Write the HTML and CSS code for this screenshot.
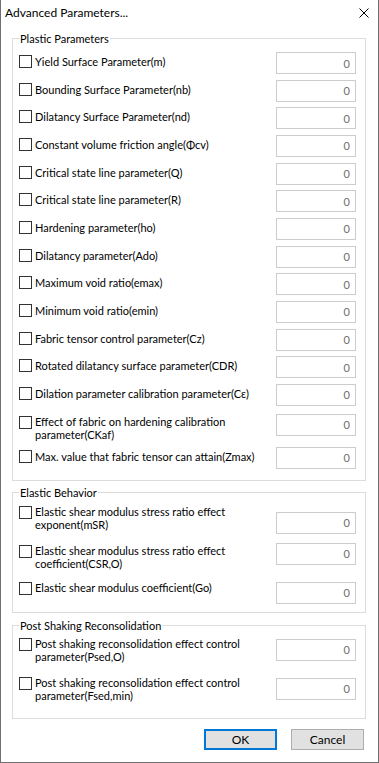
FILE: index.html
```html
<!DOCTYPE html>
<html lang="en">
<head>
    <meta charset="UTF-8">
    <meta name="viewport" content="width=device-width, initial-scale=1.0">
    <title>Advanced Parameters...</title>
    <link rel="stylesheet" href="styles.css">
</head>
<body>

    <div class="dialog">
        <div class="titlebar">
            <span class="title">Advanced Parameters...</span>
            <button type="button" class="close" aria-label="Close">
                <svg width="10" height="10" viewBox="0 0 10 10">
                    <path d="M0.5 0.5 L9.5 9.5 M9.5 0.5 L0.5 9.5" stroke="#000" stroke-width="1" fill="none"/>
                </svg>
            </button>
        </div>

        <form class="content" id="advancedForm">
            <fieldset class="group plastic">
                <legend>Plastic Parameters</legend>
                <div class="row"><input type="checkbox" class="check" id="p1"><label for="p1">Yield Surface Parameter(m)</label><input type="text" class="value" value="0" disabled></div>
                <div class="row"><input type="checkbox" class="check" id="p2"><label for="p2">Bounding Surface Parameter(nb)</label><input type="text" class="value" value="0" disabled></div>
                <div class="row"><input type="checkbox" class="check" id="p3"><label for="p3">Dilatancy Surface Parameter(nd)</label><input type="text" class="value" value="0" disabled></div>
                <div class="row"><input type="checkbox" class="check" id="p4"><label for="p4">Constant volume friction angle(Φcv)</label><input type="text" class="value" value="0" disabled></div>
                <div class="row"><input type="checkbox" class="check" id="p5"><label for="p5">Critical state line parameter(Q)</label><input type="text" class="value" value="0" disabled></div>
                <div class="row"><input type="checkbox" class="check" id="p6"><label for="p6">Critical state line parameter(R)</label><input type="text" class="value" value="0" disabled></div>
                <div class="row"><input type="checkbox" class="check" id="p7"><label for="p7">Hardening parameter(ho)</label><input type="text" class="value" value="0" disabled></div>
                <div class="row"><input type="checkbox" class="check" id="p8"><label for="p8">Dilatancy parameter(Ado)</label><input type="text" class="value" value="0" disabled></div>
                <div class="row"><input type="checkbox" class="check" id="p9"><label for="p9">Maximum void ratio(emax)</label><input type="text" class="value" value="0" disabled></div>
                <div class="row"><input type="checkbox" class="check" id="p10"><label for="p10">Minimum void ratio(emin)</label><input type="text" class="value" value="0" disabled></div>
                <div class="row"><input type="checkbox" class="check" id="p11"><label for="p11">Fabric tensor control parameter(Cz)</label><input type="text" class="value" value="0" disabled></div>
                <div class="row"><input type="checkbox" class="check" id="p12"><label for="p12">Rotated dilatancy surface parameter(CDR)</label><input type="text" class="value" value="0" disabled></div>
                <div class="row"><input type="checkbox" class="check" id="p13"><label for="p13">Dilation parameter calibration parameter(Cε)</label><input type="text" class="value" value="0" disabled></div>
                <div class="row wrap extra"><input type="checkbox" class="check" id="p14"><label for="p14">Effect of fabric on hardening calibration<br>parameter(CKaf)</label><input type="text" class="value" value="0" disabled></div>
                <div class="row"><input type="checkbox" class="check" id="p15"><label for="p15">Max. value that fabric tensor can attain(Zmax)</label><input type="text" class="value" value="0" disabled></div>
            </fieldset>

            <fieldset class="group elastic">
                <legend>Elastic Behavior</legend>
                <div class="row wrap drop"><input type="checkbox" class="check" id="e1"><label for="e1">Elastic shear modulus stress ratio effect<br>exponent(mSR)</label><input type="text" class="value" value="0" disabled></div>
                <div class="row wrap"><input type="checkbox" class="check" id="e2"><label for="e2">Elastic shear modulus stress ratio effect<br>coefficient(CSR,O)</label><input type="text" class="value" value="0" disabled></div>
                <div class="row top"><input type="checkbox" class="check" id="e3"><label for="e3">Elastic shear modulus coefficient(Go)</label><input type="text" class="value" value="0" disabled></div>
            </fieldset>

            <fieldset class="group post">
                <legend>Post Shaking Reconsolidation</legend>
                <div class="row top"><input type="checkbox" class="check" id="s1"><label for="s1">Post shaking reconsolidation effect control<br>parameter(Psed,O)</label><input type="text" class="value" value="0" disabled></div>
                <div class="row top"><input type="checkbox" class="check" id="s2"><label for="s2">Post shaking reconsolidation effect control<br>parameter(Fsed,min)</label><input type="text" class="value" value="0" disabled></div>
            </fieldset>

            <div class="actions">
                <button type="submit" class="btn btn-ok">OK</button>
                <button type="button" class="btn">Cancel</button>
            </div>
        </form>
    </div>

</body>
</html>
```
FILE: styles.css
```css
body {
    margin: 0;
    font-family: Lato, "Liberation Sans", sans-serif;
    font-size: 11px;
    color: #000;
    background: #fff;
}
.dialog {
    width: 379px;
    height: 763px;
    box-sizing: border-box;
    border-left: 1px solid #6f6f6f;
    border-right: 1px solid #6f6f6f;
    border-bottom: 1px solid #6f6f6f;
    background: #fff;
}
.titlebar {
    height: 30px;
    display: flex;
    justify-content: space-between;
    align-items: flex-start;
    padding: 0 9px 0 4px;
}
.title {
    font-size: 12px;
    line-height: 26px;
}
.close {
    margin-top: 8px;
    padding: 0;
    border: none;
    background: none;
    width: 10px;
    height: 10px;
    display: block;
}
.close svg {
    display: block;
}

/* group boxes */
.group {
    margin: 0 12px 0 11px;
    border: 1px solid #dcdcdc;
    padding: 0 9px 11px 6px;
    min-width: 0;
    display: flex;
    flex-direction: column;
}
.group legend {
    padding: 0 1px;
    line-height: 15px;
}
.plastic {
    margin-top: 1px;
    gap: 5.67px;
}
.plastic .row:first-of-type {
    margin-top: 6px;
}
.elastic {
    margin-top: 4px;
    padding-bottom: 8px;
}
.post {
    margin-top: 5px;
    padding-bottom: 16px;
}

/* rows */
.row {
    display: grid;
    grid-template-columns: 13px 1fr 80px;
    align-items: start;
}
.row label {
    margin: 3px 0 0 3px;
    line-height: 13px;
    white-space: nowrap;
}
.check {
    appearance: none;
    -webkit-appearance: none;
    width: 13px;
    height: 13px;
    margin: 3px 0 0 0;
    border: 1px solid #333;
    background: #fff;
    box-sizing: border-box;
}
.value {
    width: 80px;
    height: 22px;
    margin: 0;
    box-sizing: border-box;
    border: 1px solid #cccccc;
    background: #fff;
    color: #6d6d6d;
    text-align: right;
    padding: 0 5px 0 2px;
    font-family: inherit;
    font-size: 11px;
}
.row.wrap .check { margin-top: 2px; }
.row.wrap label { margin-top: 1px; }
.row.extra { margin-top: 2.33px; }
.row.drop .value { margin-top: 8px; }
.row.top .check { margin-top: 1px; }
.row.top label { margin-top: 0; }
.row.top .value { margin-top: 1px; }

.elastic .row:nth-of-type(1) { margin-top: 4px; }
.elastic .row:nth-of-type(2) { margin-top: 9px; }
.elastic .row:nth-of-type(3) { margin-top: 11px; }
.post .row:nth-of-type(1) { margin-top: 4px; }
.post .row:nth-of-type(2) { margin-top: 13px; }
.post .row .value { margin-top: 2px; }

/* buttons */
.actions {
    display: flex;
    justify-content: flex-end;
    gap: 14px;
    margin: 10px 14px 0 0;
}
.btn {
    width: 73px;
    height: 21px;
    box-sizing: border-box;
    border: 1px solid #adadad;
    background: #e1e1e1;
    color: #000;
    font-family: inherit;
    font-size: 12px;
    padding: 0;
    cursor: pointer;
}
.btn-ok {
    border: 2px solid #0078d7;
}
.btn:hover {
    background: #e5f1fb;
}
```
